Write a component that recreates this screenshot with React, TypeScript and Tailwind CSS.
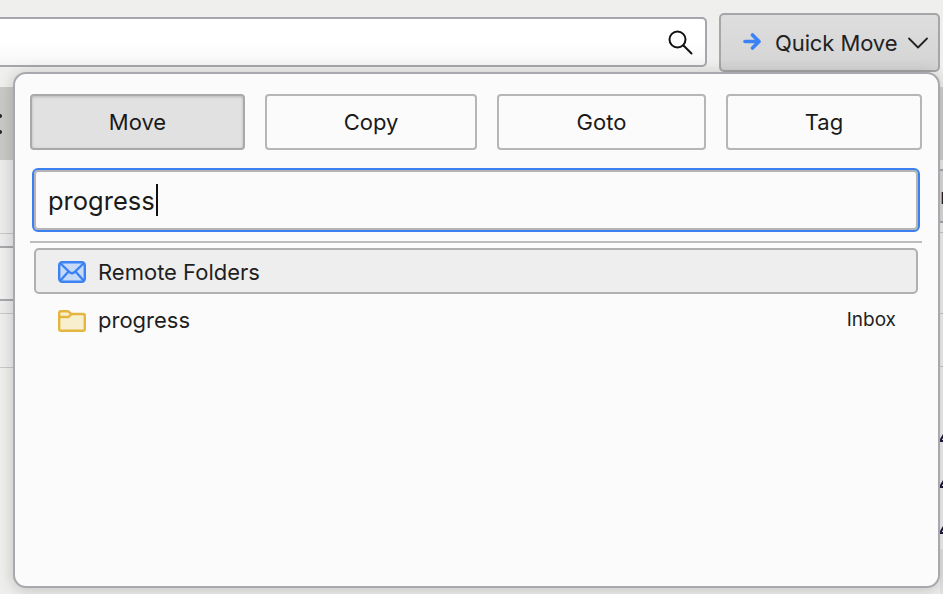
import React from 'react';

const font = "font-['Inter','Liberation_Sans',sans-serif]";

const SearchIcon = () => (
  <svg width="26" height="26" viewBox="0 0 26 26" fill="none" stroke="#111" strokeWidth="2">
    <circle cx="10.5" cy="10.5" r="8" />
    <path d="M16.5 16.5 L24.5 24.5" strokeLinecap="round" />
  </svg>
);

const ArrowIcon = () => (
  <svg width="18" height="17" viewBox="0 0 18 17" fill="none" stroke="#3b82f6" strokeWidth="3.6" strokeLinecap="round" strokeLinejoin="round">
    <path d="M2 8.5 H15" />
    <path d="M9.5 2 L16 8.5 L9.5 15" />
  </svg>
);

const ChevronIcon = () => (
  <svg width="20" height="12" viewBox="0 0 20 12" fill="none" stroke="#222" strokeWidth="1.8" strokeLinecap="round" strokeLinejoin="round">
    <path d="M1 1.5 L10 10.5 L19 1.5" />
  </svg>
);

const MailIcon = () => (
  <svg width="28" height="22" viewBox="0 0 28 22" fill="#c6d9f6" stroke="#3b82f6" strokeWidth="2.4">
    <rect x="1.2" y="1.2" width="25.6" height="19.6" rx="3" />
    <path d="M2 2 L12 11.5 Q14 13 16 11.5 L26 2" fill="none" />
    <path d="M2 20 L10.5 10.5 M26 20 L17.5 10.5" fill="none" />
  </svg>
);

const FolderIcon = () => (
  <svg width="28" height="22" viewBox="0 0 28 22" fill="#f8efcf" stroke="#e4b63f" strokeWidth="2.4" strokeLinejoin="round">
    <path d="M1.2 3 Q1.2 1.2 3 1.2 H10 L13.5 4 H25 Q26.8 4 26.8 6 V19 Q26.8 20.8 25 20.8 H3 Q1.2 20.8 1.2 19 Z" />
    <path d="M1.2 7 H10.5 L13.5 4" fill="none" />
  </svg>
);

const ActionButton: React.FC<{ label: string; width: string; active?: boolean }> = ({ label, width, active }) => (
  <button
    className={`h-14 ${width} rounded-[4px] text-[22px] text-[#1a1a1a] ${
      active
        ? 'border-2 border-[#a9a9ab] bg-[#e1e1e1] shadow-[inset_0_1px_3px_rgba(0,0,0,0.18)]'
        : 'border-2 border-[#b6b6b6] bg-[#fbfbfb]'
    }`}
  >
    {label}
  </button>
);

export default function App() {
  return (
    <div className={`relative h-screen overflow-hidden bg-[#efefee] ${font}`}>
      {/* toolbar */}
      <div className="flex h-[87px] items-start gap-3 bg-[#efefee] pr-[3px] pt-[13px]">
        <div className="mt-1 flex h-[50px] flex-1 items-center justify-end rounded-r-[5px] border-2 border-l-0 border-[#a6a6ac] bg-gradient-to-b from-white via-white to-[#f6f6f6] pr-3">
          <SearchIcon />
        </div>
        <button className="flex h-[59px] w-[221px] items-center rounded-[5px] border-2 border-[#a6a6a8] bg-gradient-to-b from-[#dedede] to-[#d4d4d4] pl-[22px] text-[22px] text-[#222]">
          <span className="-mt-[3px]">
            <ArrowIcon />
          </span>
          <span className="ml-[15px] mt-[2px] -translate-x-px tracking-[-0.1px]">Quick Move</span>
          <span className="ml-[10px]">
            <ChevronIcon />
          </span>
        </button>
      </div>

      {/* mail list behind the popup */}
      <div className="flex h-[507px]">
        <div className="flex-1">
          <div className="flex h-[73px] flex-col justify-center gap-[12px] bg-[#c9c9c8]">
            <div className="-ml-[2px] h-1 w-1 rounded-full bg-[#222]" />
            <div className="-ml-[2px] h-1 w-1 rounded-full bg-[#222]" />
          </div>
          <div className="h-[74px] border-b border-[#c9c9c9] bg-[#ededed]" />
          <div className="h-[14px] border-b-2 border-[#a9a9ac] bg-[#ededed]" />
          <div className="h-[53px] border-b-2 border-[#a9a9ac] bg-[#f0f0f0]" />
          <div className="h-[13px] border-b border-[#c9c9c9] bg-[#ededed]" />
          <div className="h-[54px] border-b border-[#c9c9c9] bg-[#efefef]" />
        </div>
        <div className="w-[3px] overflow-hidden bg-[#e4e4e4]">
          <div className="h-[73px] bg-[#d2d2d2]" />
          <div className="h-[9px] bg-[#ededed]" />
          <div className="flex h-[54px] items-center overflow-hidden border-y-2 border-[#a9a9ac] bg-[#dedede] text-[22px] leading-none text-[#222]">
            r
          </div>
          <div className="h-[10px] border-b border-[#c9c9c9] bg-[#f2f2f2]" />
          <div className="h-[81px] border-b border-[#c9c9c9] bg-[#f2f2f2]" />
          <div className="h-[53px] border-b border-[#c9c9c9] bg-[#f2f2f2]" />
          <div className="flex h-[182px] flex-col gap-[32px] overflow-hidden bg-[#f2f2f2] pt-[62px]">
            {[0, 1, 2].map(i => (
              <svg key={i} width="8" height="14" viewBox="0 0 8 14" className="shrink-0">
                <path d="M0 12 L6 2 V12 Z" fill="none" stroke="#1d1a3c" strokeWidth="2" />
              </svg>
            ))}
          </div>
        </div>
      </div>

      {/* quick move popup */}
      <div className="absolute left-[13px] top-[72px] flex h-[516px] w-[927px] flex-col rounded-[13px] border-2 border-[#a8a8ae] bg-[#fbfbfb] pl-[15px] pr-[16px] pt-[20px] shadow-[0_2px_16px_rgba(0,0,0,0.2)]">
        <div className="flex gap-5">
          <ActionButton label="Move" width="w-[215px]" active />
          <ActionButton label="Copy" width="w-[212px]" />
          <ActionButton label="Goto" width="w-[209px]" />
          <ActionButton label="Tag" width="w-[196px]" />
        </div>

        <div className="mx-[2px] mt-[18px] flex h-16 items-center rounded-[6px] border-2 border-[#3b7ff0] bg-[#fbfbfb] pl-[14px] text-[25.5px] text-[#1a1a1a] shadow-[inset_0_0_0_2px_#b4b4b4]">
          <span className="pt-[3px]">progress</span>
          <div className="ml-[1px] h-8 w-[2px] bg-[#111]" />
        </div>

        <div className="mt-[9px] h-[2px] bg-[#bcbcbc]" />

        <div className="mx-1 mt-[5px] flex h-[46px] items-center rounded-[5px] border-2 border-[#b0b0b0] bg-[#eeeeee] pl-[22px] pt-[2px] text-[22px] text-[#1f1f1f]">
          <MailIcon />
          <span className="ml-3">Remote Folders</span>
        </div>

        <div className="mx-1 mt-[3px] flex h-[47px] items-center pl-6 pr-[22px] text-[22px] text-[#1f1f1f]">
          <FolderIcon />
          <span className="ml-3">progress</span>
          <span className="ml-auto text-[19px]">Inbox</span>
        </div>
      </div>
    </div>
  );
}
